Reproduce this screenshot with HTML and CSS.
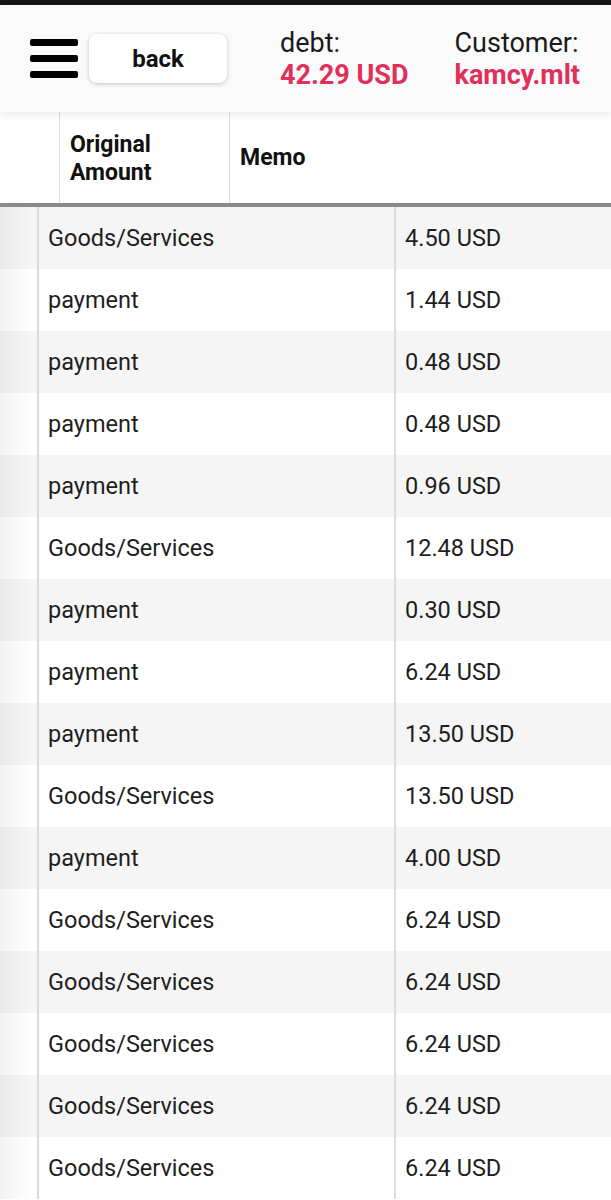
FILE: index.html
```html
<!DOCTYPE html>
<html>
<head>
<meta charset="utf-8">
<link rel="stylesheet" href="styles.css">
</head>
<body>
<div class="topbar"></div>
<header class="header">
  <div class="menu"><span></span><span></span><span></span></div>
  <button class="back">back</button>
  <div class="info debt">
    <div class="label">debt:</div>
    <div class="value">42.29 USD</div>
  </div>
  <div class="info customer">
    <div class="label">Customer:</div>
    <div class="value">kamcy.mlt</div>
  </div>
</header>
<div class="thead">
  <div class="th th-blank"></div>
  <div class="th th-orig">Original<br>Amount</div>
  <div class="th th-memo">Memo</div>
</div>
<div class="tbody">
  <div class="row"><div class="c0"></div><div class="c1">Goods/Services</div><div class="c2">4.50 USD</div></div>
  <div class="row"><div class="c0"></div><div class="c1">payment</div><div class="c2">1.44 USD</div></div>
  <div class="row"><div class="c0"></div><div class="c1">payment</div><div class="c2">0.48 USD</div></div>
  <div class="row"><div class="c0"></div><div class="c1">payment</div><div class="c2">0.48 USD</div></div>
  <div class="row"><div class="c0"></div><div class="c1">payment</div><div class="c2">0.96 USD</div></div>
  <div class="row"><div class="c0"></div><div class="c1">Goods/Services</div><div class="c2">12.48 USD</div></div>
  <div class="row"><div class="c0"></div><div class="c1">payment</div><div class="c2">0.30 USD</div></div>
  <div class="row"><div class="c0"></div><div class="c1">payment</div><div class="c2">6.24 USD</div></div>
  <div class="row"><div class="c0"></div><div class="c1">payment</div><div class="c2">13.50 USD</div></div>
  <div class="row"><div class="c0"></div><div class="c1">Goods/Services</div><div class="c2">13.50 USD</div></div>
  <div class="row"><div class="c0"></div><div class="c1">payment</div><div class="c2">4.00 USD</div></div>
  <div class="row"><div class="c0"></div><div class="c1">Goods/Services</div><div class="c2">6.24 USD</div></div>
  <div class="row"><div class="c0"></div><div class="c1">Goods/Services</div><div class="c2">6.24 USD</div></div>
  <div class="row"><div class="c0"></div><div class="c1">Goods/Services</div><div class="c2">6.24 USD</div></div>
  <div class="row"><div class="c0"></div><div class="c1">Goods/Services</div><div class="c2">6.24 USD</div></div>
  <div class="row"><div class="c0"></div><div class="c1">Goods/Services</div><div class="c2">6.24 USD</div></div>
</div>
</body>
</html>
```
FILE: styles.css
```css
* { box-sizing: border-box; }
html, body { margin: 0; padding: 0; }
body {
  font-family: Roboto, "Liberation Sans", sans-serif;
  color: #1e1e1e;
  background: #fff;
  width: 611px;
  height: 1200px;
  overflow: hidden;
}
.topbar {
  height: 5px;
  background: #161616;
}
.header {
  position: relative;
  z-index: 2;
  height: 107px;
  background: #fafafa;
  box-shadow: 0 3px 8px rgba(0,0,0,0.08);
  display: flex;
  align-items: center;
  padding-left: 30px;
}
.menu {
  width: 48px;
  display: flex;
  flex-direction: column;
  gap: 9px;
  margin-top: 0;
}
.menu span {
  display: block;
  height: 7px;
  border-radius: 2px;
  background: #000;
}
.back {
  margin-left: 11px;
  width: 138px;
  height: 49px;
  margin-top: 0;
  border: none;
  border-radius: 8px;
  background: #fff;
  box-shadow: 0 1px 4px rgba(0,0,0,0.22);
  font-family: Roboto, "Liberation Sans", sans-serif;
  font-weight: bold;
  font-size: 24px;
  color: #111;
}
.info {
  font-size: 27px;
  line-height: 32px;
  margin-top: 0;
}
.debt { margin-left: 53px; }
.customer { margin-left: 46px; }
.label { color: #1a1a1a; }
.value { color: #e0305a; font-weight: bold; }
.thead {
  display: grid;
  grid-template-columns: 60px 170px 1fr;
  height: 95px;
  border-bottom: 4px solid #8a8a8a;
  background: #fff;
}
.th {
  display: flex;
  align-items: center;
  padding-left: 10px;
  font-weight: bold;
  font-size: 23px;
  line-height: 28px;
  color: #111;
}
.th-blank { border-right: 1px solid #dcdcdc; }
.th-orig { border-right: 1px solid #dcdcdc; padding-top: 2px; }
.th-memo { padding-bottom: 0; }
.tbody { display: flex; flex-direction: column; }
.row {
  display: grid;
  grid-template-columns: 39px 357px 1fr;
  height: 62px;
  background: #fff;
  font-size: 23.5px;
}
.row:nth-child(odd) { background: #f5f5f5; }
.row > div { display: flex; align-items: center; }
.c0 {
  border-right: 2px solid #dadada;
  background: linear-gradient(to right, rgba(0,0,0,0.05), rgba(0,0,0,0) 30px);
}
.c1 { padding-left: 9px; border-right: 2px solid #dcdcdc; }
.c2 { padding-left: 9px; }
```
